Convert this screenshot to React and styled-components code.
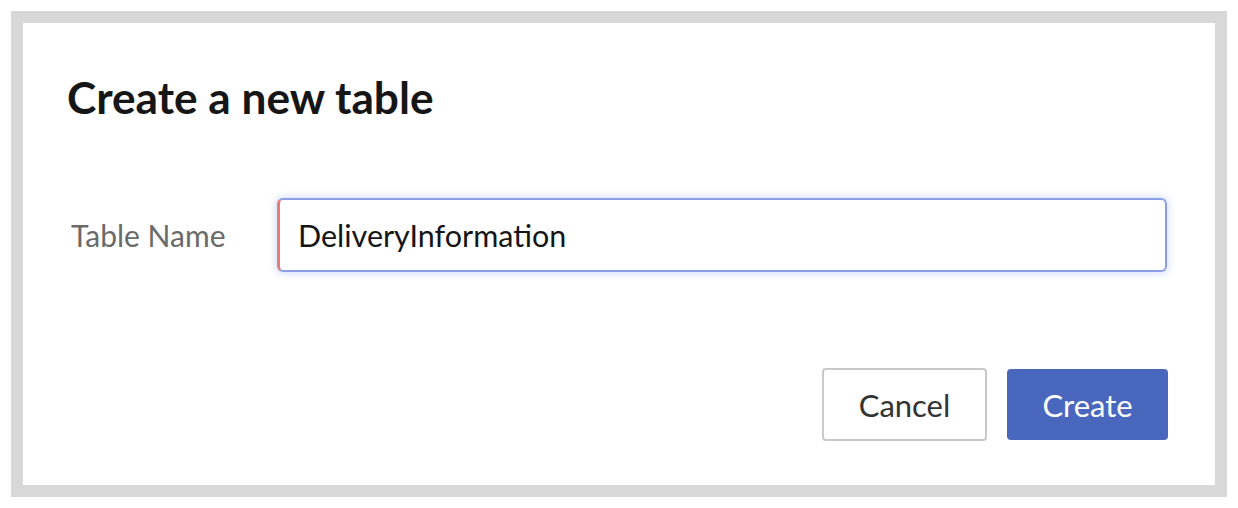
import React from "react";
import styled, { createGlobalStyle } from "styled-components";

const Global = createGlobalStyle`
  html, body { margin: 0; padding: 0; background: #ffffff; }
  body { font-family: Lato, "Noto Sans", sans-serif; }
`;

const Page = styled.div`
  padding: 11px;
  width: 1238px;
  height: 508px;
  box-sizing: border-box;
`;

const Frame = styled.div`
  width: 1216px;
  height: 486px;
  box-sizing: border-box;
  border: 12px solid #d8d8d8;
  background: #fff;
  display: flex;
  flex-direction: column;
  padding: 50px 48px 0 44px;
`;

const Title = styled.h1`
  margin: 0;
  font-family: Lato, sans-serif;
  font-weight: 700;
  font-size: 44.2px;
  line-height: 48px;
  color: #161616;
`;

const Row = styled.div`
  display: flex;
  align-items: center;
  margin-top: 77px;
`;

const Label = styled.label`
  width: 210px;
  padding-left: 4px;
  box-sizing: border-box;
  font-size: 30px;
  color: #6a6a6a;
`;

const Input = styled.input`
  flex: 1;
  height: 74px;
  box-sizing: border-box;
  border: 2px solid #8c9ee4;
  border-left: 3px solid #e47e7e;
  border-radius: 6px;
  box-shadow: 0 0 6px 2px rgba(120, 140, 240, 0.25);
  padding: 0 18px;
  font-family: Lato, sans-serif;
  font-size: 30.5px;
  color: #151515;
  outline: none;
  background: #fff;
`;

const Footer = styled.div`
  display: flex;
  justify-content: flex-end;
  align-items: center;
  gap: 20px;
  margin-top: 96px;
  margin-right: -1px;
`;

const Button = styled.button`
  height: ${(p) => (p.$primary ? 71 : 73)}px;
  box-sizing: border-box;
  border-radius: 4px;
  font-family: Lato, sans-serif;
  font-size: 31px;
  cursor: pointer;
  width: ${(p) => p.$w}px;
  border: ${(p) => (p.$primary ? "none" : "2px solid #c9c9c9")};
  background: ${(p) => (p.$primary ? "#4a67be" : "#fff")};
  color: ${(p) => (p.$primary ? "#fff" : "#333")};
`;

export default function App() {
  return (
    <>
      <Global />
      <Page>
        <Frame>
          <Title>Create a new table</Title>
          <Row>
            <Label>Table Name</Label>
            <Input defaultValue="DeliveryInformation" />
          </Row>
          <Footer>
            <Button $w={165}>Cancel</Button>
            <Button $primary $w={161}>Create</Button>
          </Footer>
        </Frame>
      </Page>
    </>
  );
}
